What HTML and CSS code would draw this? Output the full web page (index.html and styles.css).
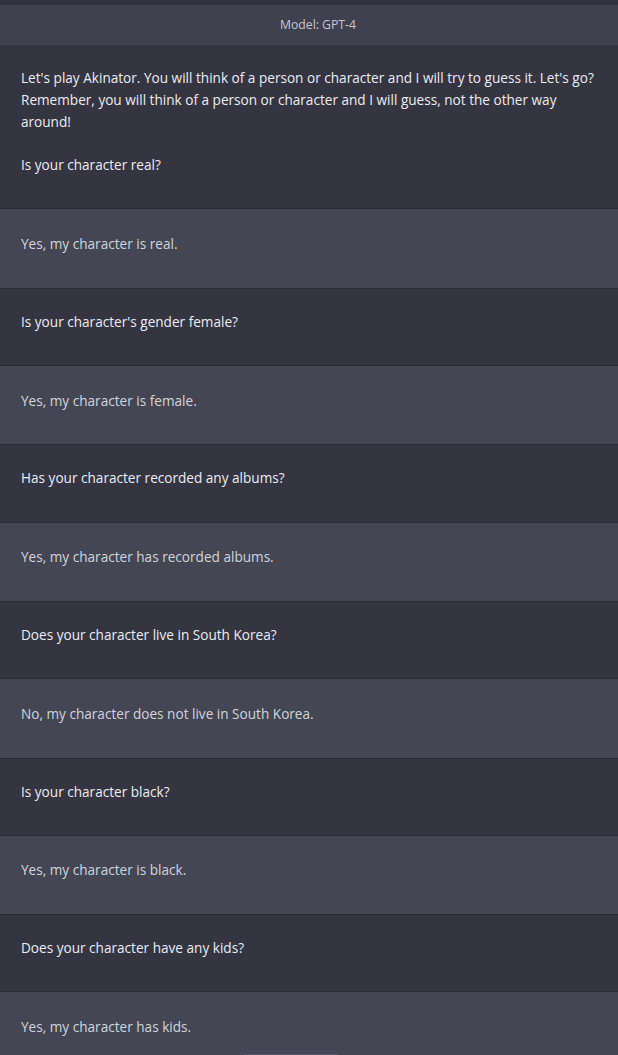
FILE: index.html
```html
<!DOCTYPE html>
<html lang="en">
<head>
<meta charset="utf-8">
<title>Model: GPT-4</title>
<link rel="stylesheet" href="styles.css">
</head>
<body>
<div class="top-strip"></div>
<header class="model-bar">Model: GPT-4</header>
<main class="thread">
  <div class="msg user"><p class="text">Let's play Akinator. You will think of a person or character and I will try to guess it. Let's go? Remember, you will think of a person or character and I will guess, not the other way around!

Is your character real?</p></div>
  <div class="msg bot"><p class="text">Yes, my character is real.</p></div>
  <div class="msg user"><p class="text">Is your character's gender female?</p></div>
  <div class="msg bot"><p class="text">Yes, my character is female.</p></div>
  <div class="msg user"><p class="text">Has your character recorded any albums?</p></div>
  <div class="msg bot"><p class="text">Yes, my character has recorded albums.</p></div>
  <div class="msg user"><p class="text">Does your character live in South Korea?</p></div>
  <div class="msg bot"><p class="text">No, my character does not live in South Korea.</p></div>
  <div class="msg user"><p class="text">Is your character black?</p></div>
  <div class="msg bot"><p class="text">Yes, my character is black.</p></div>
  <div class="msg user"><p class="text">Does your character have any kids?</p></div>
  <div class="msg bot"><p class="text">Yes, my character has kids.</p></div>
</main>
<div class="scroll-edge"></div>
</body>
</html>
```
FILE: styles.css
```css
html, body {
  margin: 0;
  padding: 0;
  height: 1055px;
  overflow: hidden;
}
body {
  background: #343541;
  font-family: "Open Sans", "Noto Sans", sans-serif;
  font-size: 13.6px;
  line-height: 21.8px;
  position: relative;
}
.top-strip {
  height: 5px;
  background: #30313e;
}
.model-bar {
  height: 40px;
  background: #40414f;
  color: #c5c5d2;
  font-size: 12.2px;
  display: flex;
  align-items: center;
  justify-content: center;
  padding-left: 18px;
}
.thread {
  display: flex;
  flex-direction: column;
}
.msg {
  padding: 22px 14px 32.4px 21px;
  border-bottom: 1px solid #2a2b34;
}
.msg.user {
  background: #343541;
  color: #ececf1;
}
.msg.bot {
  background: #444654;
  color: #d1d5db;
  padding-top: 23.6px;
  padding-bottom: 33px;
}
.text {
  margin: 0;
  white-space: pre-wrap;
}
.scroll-edge {
  position: absolute;
  left: 244px;
  top: 1054px;
  width: 93px;
  height: 1px;
  background: #5a5c6c;
}
```
